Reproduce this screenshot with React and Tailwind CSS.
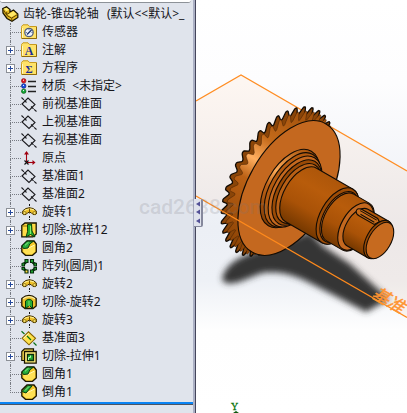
const treeItems = [
  { icon: "sensor", label: "传感器" },
  { icon: "note", label: "注解", expandable: true },
  { icon: "equation", label: "方程序", expandable: true },
  { icon: "material", label: "材质  <未指定>" },
  { icon: "plane", label: "前视基准面" },
  { icon: "plane", label: "上视基准面" },
  { icon: "plane", label: "右视基准面" },
  { icon: "origin", label: "原点" },
  { icon: "plane", label: "基准面1" },
  { icon: "plane", label: "基准面2" },
  { icon: "revolve", label: "旋转1", expandable: true },
  { icon: "loftCut", label: "切除-放样12", expandable: true },
  { icon: "fillet", label: "圆角2" },
  { icon: "pattern", label: "阵列(圆周)1" },
  { icon: "revolve", label: "旋转2", expandable: true },
  { icon: "revolveCut", label: "切除-旋转2", expandable: true },
  { icon: "revolve", label: "旋转3", expandable: true },
  { icon: "solidPlane", label: "基准面3" },
  { icon: "extrudeCut", label: "切除-拉伸1", expandable: true },
  { icon: "fillet", label: "圆角1" },
  { icon: "chamfer", label: "倒角1" },
];

function Folder() {
  return (
    <>
      <path d="M.5 3.5V14.5H15.5V2.5H8.5L7 .8H2L.5 2.5Z" fill="#ffe268" stroke="#c79a1e" />
      <path d="M1.5 4V13.5" stroke="#fff8c4" />
      <path d="M15.5 3V14.5H1" fill="none" stroke="#8f6a0c" />
    </>
  );
}

function Block() {
  return (
    <>
      <path d="M.8 6 6 1H13L15.3 4V12L11.5 15.3H4.5L.8 12Z" fill="#f5c928" stroke="#1c1600" strokeWidth="1.3" />
      <path d="M6 8.5 14 4.5V11.5L11 14.3H5.5L2.5 12V9Z" fill="#ffe155" />
      <path d="M6.5 8.5 13.5 5" stroke="#fff7b5" />
    </>
  );
}

const drawings = {
  sensor: (
    <>
      <Folder />
      <circle cx="8" cy="8.5" r="4.2" fill="#eef4ff" stroke="#53607c" strokeWidth="1.3" />
      <path d="M6 10.5 10.5 6" stroke="#1c356f" strokeWidth="1.4" />
      <path d="M8 5.2v1M4.8 8.5h1M10.5 8.5h1" stroke="#53607c" />
    </>
  ),
  note: (
    <>
      <Folder />
      <text x="8" y="13" textAnchor="middle" fontSize="12" fontWeight="700" fontFamily="Liberation Serif, serif" fill="#1b2d96">A</text>
    </>
  ),
  equation: (
    <>
      <Folder />
      <text x="8" y="12.5" textAnchor="middle" fontSize="11" fontWeight="700" fontFamily="Liberation Serif, serif" fill="#1b2d96">Σ</text>
    </>
  ),
  material: (
    <>
      <circle cx="2.7" cy="2.8" r="2.3" fill="#dc1620" stroke="#700" strokeWidth=".5" />
      <circle cx="2.7" cy="8" r="2.3" fill="#1650e0" stroke="#006" strokeWidth=".5" />
      <circle cx="2.7" cy="13.2" r="2.3" fill="#14a638" stroke="#040" strokeWidth=".5" />
      <path d="M2 2.2h1M2 7.4h1M2 12.6h1" stroke="#fff" />
      <path d="M7 3.5h8M7 8.5h8M7 13.5h8" stroke="#222" strokeWidth="1.4" />
    </>
  ),
  plane: (
    <>
      <path d="M1 8 7 2 14 8.5 8 14.5Z" fill="none" stroke="#1b1b1f" strokeWidth="1.1" />
      <path d="M.5 1.5 5.500 6.500M10 10.500 15.5 15.5" stroke="#1b1b1f" strokeWidth="1.1" strokeDasharray="3.500 .7" />
    </>
  ),
  solidPlane: (
    <>
      <path d="M1 8.3 7.5 1.8 14.5 8.3 8 14.8Z" fill="#ffe24c" stroke="#856200" strokeWidth="1.1" />
      <path d="M2.5 8.3 7.5 3.3" stroke="#fffbd5" />
      <path d="M.5 1.2 3.5 4M6 6 10 10M12.5 12.5 15.5 15.5" stroke="#087018" strokeWidth="1.2" />
    </>
  ),
  origin: (
    <>
      <path d="M5.5 12V4" stroke="#a00010" strokeWidth="1.1" />
      <path d="M5.5 1 8 4.5H3Z" fill="#a00010" />
      <path d="M6 12.5h6" stroke="#a00010" strokeWidth="1.1" />
      <path d="M14.5 12.5 11.5 10v5Z" fill="#a00010" />
      <path d="M3.5 10.5 7.5 14.5M7.5 10.5 3.5 14.5" stroke="#111" strokeWidth="1.1" />
    </>
  ),
  revolve: (
    <>
      <path d="M8.5 0v3.5M8.5 12v4" stroke="#111" strokeDasharray="2 1" />
      <path d="M1 9Q1.5 6 5 4.5Q8.5 3 12 4.5Q15.5 6 16 9Q15 11.5 12 10.5L10 8.5H7L5 10.5Q2 11.5 1 9Z" fill="#efc027" stroke="#3b2a00" strokeWidth="1" />
      <path d="M3.5 6.5Q8 3.8 13 6" fill="none" stroke="#fff29b" strokeWidth="1.2" />
      <ellipse cx="3.5" cy="9" rx="1.7" ry="1.4" fill="#ffe66a" stroke="#5b4300" strokeWidth=".6" />
      <ellipse cx="13.5" cy="9" rx="1.7" ry="1.4" fill="#ffe66a" stroke="#5b4300" strokeWidth=".6" />
      <path d="M8.5 4.5v5" stroke="#704d00" />
    </>
  ),
  loftCut: (
    <>
      <path d="M.8 3.5 4 1H15.2V12L12 14.8H.8Z" fill="#ffdb45" stroke="#171300" strokeWidth="1.3" />
      <path d="M1.3 4H6L8 2" fill="none" stroke="#927000" />
      <path d="M6.5 2.5 10.5 2 11 9 14 15 9.5 12.5 5 15Q7.5 10 6.5 2.5Z" fill="#25b32e" stroke="#063d0a" />
      <path d="M9.5 4 9.5 12" stroke="#86ef72" />
    </>
  ),
  fillet: (
    <>
      <Block />
      <path d="M1 6 6 1.2H12.5Q8 3 7 8L2.5 8.5Z" fill="#27ad3c" stroke="#053d10" />
      <path d="M4 5.3 7.5 2.2" stroke="#91eb88" />
    </>
  ),
  chamfer: (
    <>
      <Block />
      <path d="M1 7.5 7 1.2 11 2 5 9Z" fill="#27ad3c" stroke="#053d10" />
      <path d="M4 6.5 8 2.5" stroke="#91eb88" />
    </>
  ),
  pattern: (
    <g fill="#1fa831" stroke="#062c0b" strokeWidth="1.1">
      <path d="M4 1.5H7V4.5H5.5L4 6ZM9.5 1.5H12.5V6L11 4.5H9.5Z" />
      <path d="M1 5.5 3.5 4.5V8H1ZM13 4.5 15.5 5.5V8H13Z" />
      <path d="M1 9.5H3.5V12.5L1 11.5ZM13 9.5H15.5V11.5L13 12.5Z" />
      <path d="M4 11 5.5 12H7V15H4Z" fill="#ffd83c" />
      <path d="M12.5 11 11 12H9.5V15H12.5Z" />
    </g>
  ),
  revolveCut: (
    <>
      <path d="M.8 4.5Q8 -1.5 15.2 4.5V12L12 14.5H4L.8 12Z" fill="#edc02a" stroke="#201700" strokeWidth="1.3" />
      <path d="M2 4.8Q8 .5 14 4.8" fill="none" stroke="#fff0a0" strokeWidth="1.3" />
      <path d="M4.5 14.5V7Q8 3.5 11.5 7V14.5L8.5 11.5Z" fill="#27ad35" stroke="#053d0a" />
      <path d="M8 7v5" stroke="#7ce66d" />
    </>
  ),
  extrudeCut: (
    <>
      <path d="M.8 3.5 3.5 .8H12.5L12 12.5H.8Z" fill="#ffdf4c" stroke="#171300" strokeWidth="1.2" />
      <path d="M3.5 3.5H15.2V15.2H3.5Z" fill="#ffec7a" stroke="#171300" strokeWidth="1.3" />
      <path d="M6.5 6.5H12.5V12.5H6.5Z" fill="#23a934" stroke="#082b0a" strokeWidth="1.3" />
      <path d="M7.5 12V9.5H9.5V7.5" fill="none" stroke="#b7ffb0" />
    </>
  ),
};

function FeatureIcon({ name }) {
  return (
    <svg viewBox="0 0 16 16" className="size-4 shrink-0" aria-hidden="true">
      {drawings[name]}
    </svg>
  );
}

function PartIcon() {
  return (
    <svg viewBox="0 0 17 16" className="h-4 w-[17px] shrink-0" aria-hidden="true">
      <path d="M.8 2.5 4.5 .8 8 3.5V6L11.5 4 15.8 8V11.5L10 15.2 5 12.5 1 7Z" fill="#e9bd22" stroke="#1c1600" strokeWidth="1.3" />
      <path d="M1.8 2.8 4.5 1.7 7 3.8 4.5 5.2Z" fill="#fff17c" />
      <path d="M6 8.5 11.5 5.2 14.5 8 9.5 11Z" fill="#ffe865" />
      <path d="M1.5 4 5 9.5 9.8 12.3V15M9.8 12 15.5 8.5M4.7 5.8V8.5L8 6.5" fill="none" stroke="#604600" />
    </svg>
  );
}

function TreeRow({ item, last }) {
  return (
    <li className="flex h-[18px] items-center">
      <div className="relative h-[18px] w-[21px] shrink-0 pl-[10px]">
        <div className="h-[10px] border-b border-l border-dotted border-[#777b83]" />
        {!last && <div className="h-2 border-l border-dotted border-[#777b83]" />}
        {item.expandable && (
          <button
            type="button"
            aria-label={`展开 ${item.label}`}
            className="absolute top-[5px] left-[6px] flex size-[9px] items-center justify-center border border-[#8c9097] bg-white"
          >
            <svg viewBox="0 0 5 5" className="size-[5px] shrink-0" aria-hidden="true">
              <path d="M0 2.5h5M2.5 0v5" stroke="#274a9c" />
            </svg>
          </button>
        )}
      </div>
      <FeatureIcon name={item.icon} />
      <span className="pl-[5px] whitespace-pre">{item.label}</span>
    </li>
  );
}

function FeatureTree() {
  return (
    <aside className="w-[193px] shrink-0 bg-[#e0e4ec]">
      <div className="mr-[2px] h-[3px] rounded-b-md border-b border-[#8d9298] bg-white" />
      <div className="flex h-5 items-center gap-1 pt-[2px] pl-[2px]">
        <PartIcon />
        <h1 className="flex gap-2 whitespace-nowrap">
          <span>齿轮-锥齿轮轴</span>
          <span>(默认&lt;&lt;默认&gt;_</span>
        </h1>
      </div>
      <ul>
        {treeItems.map((item, index) => (
          <TreeRow key={index} item={item} last={index === treeItems.length - 1} />
        ))}
      </ul>
      <div className="mt-px h-[3px] border-b border-[#4c5563] bg-[#0a84f4]" />
    </aside>
  );
}

const TEETH = 38;

// Closed rim of a gear seen along its tilted axis, x being the axis direction.
function gearRim(cx, tip, root) {
  const points = [];
  for (let i = 0; i < TEETH; i += 1) {
    [
      [0, root],
      [0.16, root + 1],
      [0.44, tip - 1],
      [0.52, tip],
      [0.66, tip],
      [0.74, tip - 1],
      [0.94, root + 1],
    ].forEach(([step, radius]) => {
      const angle = ((i + step) / TEETH) * Math.PI * 2;
      points.push(`${(cx + radius * 0.55 * Math.cos(angle)).toFixed(2)} ${(radius * Math.sin(angle)).toFixed(2)}`);
    });
  }
  return `M${points.join("L")}Z`;
}

function Cylinder({ from, to, radius }) {
  const rx = radius * 0.55;
  return (
    <path
      d={`M${from} ${-radius}H${to}A${rx} ${radius} 0 0 1 ${to} ${radius}H${from}A${rx} ${radius} 0 0 1 ${from} ${-radius}Z`}
      fill="url(#shaft)"
    />
  );
}

function Disc({ x, radius, fill = "#c4681f" }) {
  return <ellipse cx={x} cy="0" rx={radius * 0.55} ry={radius} fill={fill} />;
}

function Model() {
  return (
    <svg viewBox="196 0 211 413" className="block w-full" role="img" aria-label="锥齿轮轴">
      <defs>
        <linearGradient id="sky" x1="0" y1="0" x2="0" y2="1">
          <stop offset="0" stopColor="#ffffff" />
          <stop offset=".2" stopColor="#fdfdfe" />
          <stop offset=".55" stopColor="#eceff5" />
          <stop offset=".68" stopColor="#eef1f6" />
          <stop offset=".8" stopColor="#fefefe" />
          <stop offset="1" stopColor="#ffffff" />
        </linearGradient>
        <linearGradient id="shaft" x1="0" y1="0" x2="0" y2="1">
          <stop offset="0" stopColor="#ad560a" />
          <stop offset=".3" stopColor="#b85c0b" />
          <stop offset=".65" stopColor="#a95207" />
          <stop offset="1" stopColor="#753800" />
        </linearGradient>
        <linearGradient id="rim" gradientUnits="userSpaceOnUse" x1="0" y1="-80" x2="0" y2="80">
          <stop offset="0" stopColor="#9c4d09" />
          <stop offset=".3" stopColor="#c46a1a" />
          <stop offset=".45" stopColor="#ffae5f" />
          <stop offset=".58" stopColor="#ba6014" />
          <stop offset="1" stopColor="#8b4305" />
        </linearGradient>
        <linearGradient id="groove" x1="0" y1="0" x2="0" y2="1">
          <stop offset="0" stopColor="#a6510a" />
          <stop offset=".4" stopColor="#ffac58" />
          <stop offset=".6" stopColor="#be6218" />
          <stop offset="1" stopColor="#843f04" />
        </linearGradient>
        <filter id="soft" x="-20%" y="-30%" width="140%" height="160%">
          <feGaussianBlur stdDeviation="3" />
        </filter>
      </defs>

      <rect x="196" width="211" height="413" fill="url(#sky)" />
      <path d="M196 101 241 75 407 171V317L196 196Z" fill="#ff8c28" fillOpacity=".06" />
      <path d="M196 101 241 75 407 171" fill="none" stroke="#ff8d22" strokeWidth="1.2" />

      <path
        d="M222 279Q225 264 246 255L310 232L323 246L350 264L389 299L366 312L343 300L312 284Q285 269 262 273L239 282Q224 286 222 279Z"
        fill="#343536"
        filter="url(#soft)"
      />

      <g transform="translate(289 188) rotate(30)" stroke="#120b04" strokeWidth="1.1">
        <path d={gearRim(-13, 82, 74)} fill="#8a4508" strokeWidth="1.3" />
        <path d={gearRim(-10, 79, 69)} fill="url(#rim)" stroke="#4a2304" strokeWidth=".5" />
        <ellipse cx="-4" cy="0" rx="40" ry="72" fill="url(#rim)" stroke="none" />
        <Disc x={0} radius={74} />

        <Disc x={1} radius={43} fill="url(#groove)" />
        <Disc x={4} radius={41} fill="#b35a10" />
        <Disc x={7} radius={39} />
        <Disc x={9} radius={36} fill="#9a4a06" />
        <Disc x={11} radius={33} fill="#b86016" />
        <Cylinder from={14} to={56} radius={31} />
        <Disc x={56} radius={31} fill="#9d4c06" />
        <Disc x={58} radius={28} />
        <Cylinder from={59} to={77} radius={27} />
        <Disc x={77} radius={26} />
        <Cylinder from={79} to={102} radius={21} />
        <path d="M74 -18Q68 -17 70 -13Q71 -11 75 -11H92L95 -16 92 -18Z" fill="#c66c1c" />
        <path d="M73 -16H92M75 -13H91" fill="none" strokeWidth=".9" />
        <Disc x={103} radius={21} fill="#9d4c06" />
        <Disc x={105} radius={20} fill="#c66a1f" />
      </g>

      <path d="M196 196 407 317.5" fill="none" stroke="#ff8a1c" strokeWidth="1.2" />
      <text
        transform="translate(371 297) rotate(30)"
        fontSize="17"
        fontStyle="italic"
        fontFamily="Noto Sans CJK SC, sans-serif"
        fill="#ff9430"
        stroke="#ff9430"
        strokeWidth=".4"
      >
        基准
      </text>
      <text x="231" y="410" fontSize="10" fontFamily="Liberation Serif, serif" fill="#0b750b" stroke="#0b750b" strokeWidth=".3">Y</text>
      <path d="M233 413 236 411 239 413Z" fill="#0b550b" />
    </svg>
  );
}

function App() {
  return (
    <div className="relative flex min-h-screen overflow-hidden bg-white font-['Noto_Sans','Noto_Sans_CJK_SC',sans-serif] text-xs leading-[18px] text-[#15151a]">
      <FeatureTree />
      <div className="relative w-[3px] shrink-0 border-r border-[#45465c] bg-[#abb0c4]">
        <button
          type="button"
          aria-label="折叠面板"
          className="absolute top-[199px] left-[1px] z-10 flex h-7 w-[9px] flex-col items-center justify-around rounded-r-xs border-r-2 border-b border-[#85889c] bg-[#dfe2ec] py-px"
        >
          {[0, 1, 2].map((arrow) => (
            <svg key={arrow} viewBox="0 0 4 6" className="h-[6px] w-1 shrink-0" aria-hidden="true">
              <path d="M4 .5V5.5L0 3Z" fill="#514f96" />
            </svg>
          ))}
        </button>
      </div>
      <main className="min-w-0 flex-1">
        <Model />
      </main>
      <span className="pointer-events-none absolute top-[195px] left-[139px] font-['Roboto',sans-serif] text-[21px] leading-6 font-medium text-[#77777f]/20">
        cad2688.com
      </span>
    </div>
  );
}

export default App;
